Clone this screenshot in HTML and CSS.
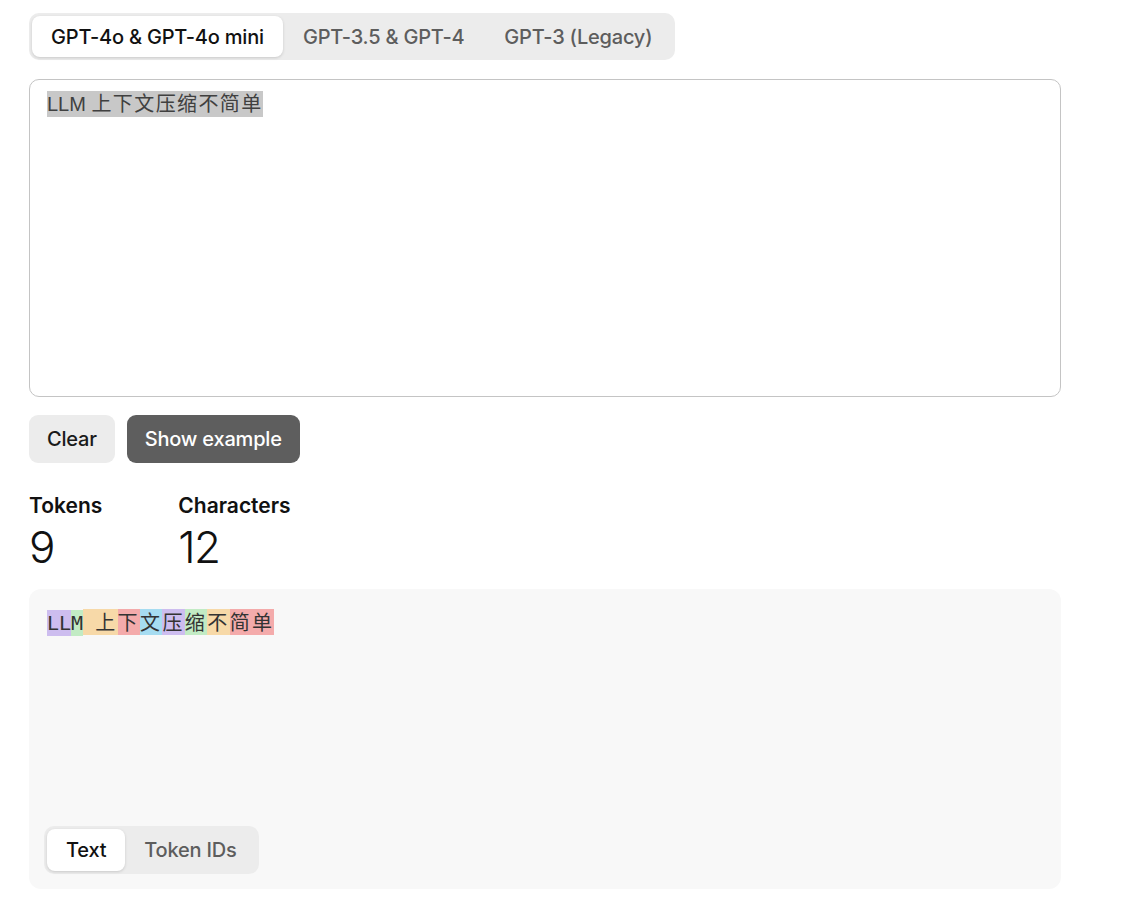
FILE: index.html
```html
<!DOCTYPE html>
<html lang="zh">
<head>
<meta charset="utf-8">
<title>Tokenizer</title>
<link rel="stylesheet" href="styles.css">
</head>
<body>
<main class="page">
  <div class="seg seg-models">
    <button class="seg-item active">GPT-4o &amp; GPT-4o mini</button>
    <button class="seg-item">GPT-3.5 &amp; GPT-4</button>
    <button class="seg-item">GPT-3 (Legacy)</button>
  </div>

  <div class="input-box">
    <span class="selected">LLM <span class="cjk-in">上下文压缩不简单</span></span>
  </div>

  <div class="actions">
    <button class="btn btn-light">Clear</button>
    <button class="btn btn-dark">Show example</button>
  </div>

  <div class="stats">
    <div class="stat">
      <div class="stat-label">Tokens</div>
      <div class="stat-value">9</div>
    </div>
    <div class="stat">
      <div class="stat-label">Characters</div>
      <div class="stat-value">12</div>
    </div>
  </div>

  <div class="output">
    <div class="tokens"><span class="tk t-purple">LL</span><span class="tk t-green">M</span><span class="tk t-orange"> <span class="cj">上</span></span><span class="tk t-red cj">下</span><span class="tk t-blue cj">文</span><span class="tk t-purple cj">压</span><span class="tk t-green cj">缩</span><span class="tk t-orange cj">不</span><span class="tk t-red cj">简单</span></div>
    <div class="seg seg-view">
      <button class="seg-item active">Text</button>
      <button class="seg-item">Token IDs</button>
    </div>
  </div>
</main>
</body>
</html>
```

FILE: styles.css
```css
* { box-sizing: border-box; }

html, body {
  margin: 0;
  padding: 0;
  background: #ffffff;
}

body {
  font-family: Inter, "Noto Sans", "Noto Sans CJK SC", sans-serif;
  color: #1a1a1a;
}

.page {
  width: 1032px;
  margin-left: 29px;
  padding-top: 13px;
}

button {
  font-family: inherit;
  border: none;
  cursor: pointer;
}

.seg {
  display: inline-flex;
  background: #ececec;
  border-radius: 10px;
  padding: 3px;
}

.seg-item {
  background: transparent;
  color: #5d5d5d;
  font-size: 20px;
  font-weight: 450;
  border-radius: 8px;
  height: 41px;
  padding: 0 19px;
  letter-spacing: -0.2px;
}

.seg-models .seg-item {
  padding: 0 20px;
}

.seg-models .seg-item.active {
  padding: 0 19px;
}

.seg-item.active {
  background: #ffffff;
  color: #111111;
  box-shadow: 0 1px 3px rgba(0,0,0,0.15);
}

.input-box {
  margin-top: 19px;
  height: 318px;
  border: 1.5px solid #c4c4c4;
  border-radius: 10px;
  padding: 10px 17px;
  font-family: "Liberation Sans", Arial, "Noto Sans CJK SC", sans-serif;
  font-size: 20px;
  line-height: 26px;
  color: #404040;
}

.selected {
  background: #c8c8c8;
  padding: 2px 0;
}

.cjk-in {
  font-family: "Noto Sans CJK SC", sans-serif;
  letter-spacing: 1.4px;
  font-size: 20px;
}

.actions {
  display: flex;
  gap: 12px;
  margin-top: 18px;
}

.btn {
  height: 48px;
  border-radius: 9px;
  font-size: 20px;
  font-weight: 450;
  padding: 0 18px;
  letter-spacing: -0.2px;
}

.btn-light {
  background: #ececec;
  color: #1a1a1a;
}

.btn-dark {
  background: #5e5e5e;
  color: #ffffff;
}

.stats {
  display: flex;
  gap: 76px;
  margin-top: 29px;
}

.stat-label {
  font-size: 21px;
  font-weight: 600;
  line-height: 28px;
  color: #111;
}

.stat-value {
  font-size: 44px;
  font-weight: 300;
  line-height: 50px;
  letter-spacing: -1.5px;
  color: #111;
  margin-top: 2px;
}

.output {
  margin-top: 17px;
  height: 300px;
  background: #f8f8f8;
  border-radius: 12px;
  padding: 20px 18px 15px 15px;
  display: flex;
  flex-direction: column;
  justify-content: space-between;
  align-items: flex-start;
}

.tokens {
  padding-left: 3px;
  font-family: "DejaVu Sans Mono", "Noto Sans CJK SC", monospace;
  font-size: 20px;
  line-height: 26px;
  color: #333;
}

.tk {
  display: inline-block;
  white-space: pre;
  height: 26px;
}

.cj {
  font-family: "Noto Sans CJK SC", sans-serif;
  letter-spacing: 2.4px;
}

.t-purple { background: #cdbdef; }
.t-green  { background: #c2ebc4; }
.t-orange { background: #f7d9a8; }
.t-red    { background: #f4abab; }
.t-blue   { background: #a6dcf1; }

.seg-view .seg-item {
  height: 42px;
  padding: 0 19px;
}
```
